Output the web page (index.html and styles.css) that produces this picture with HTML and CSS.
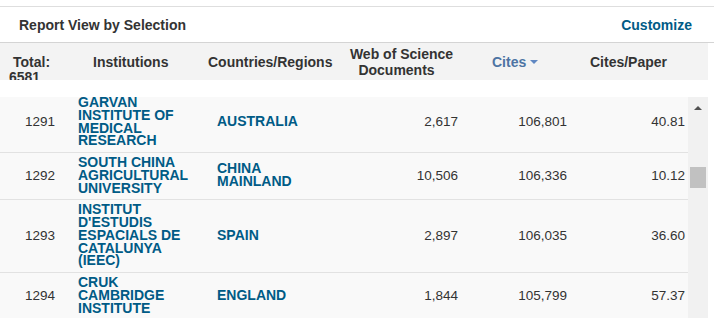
FILE: index.html
```html
<!DOCTYPE html>
<html>
<head>
<meta charset="utf-8">
<link rel="stylesheet" href="styles.css">
</head>
<body>
<div class="panel">
  <div class="titlebar">
    <span class="title">Report View by Selection</span>
    <a class="customize">Customize</a>
  </div>
  <div class="thead">
    <div class="th th-total"><span class="total-label">Total:</span><span class="total-num">6581</span></div>
    <div class="th th-inst">Institutions</div>
    <div class="th th-country">Countries/Regions</div>
    <div class="th th-docs"><span class="l1">Web of Science</span><span class="l2">Documents</span></div>
    <div class="th th-cites">Cites<span class="caret"></span></div>
    <div class="th th-cpp">Cites/Paper</div>
    <div class="th th-gap"></div>
  </div>
  <div class="tbody">
    <div class="rows">
      <div class="rows-inner">
        <div class="row">
          <div class="td rank">1291</div>
          <div class="td inst">GARVAN INSTITUTE OF MEDICAL RESEARCH</div>
          <div class="td country">AUSTRALIA</div>
          <div class="td num docs">2,617</div>
          <div class="td num cites">106,801</div>
          <div class="td num cpp">40.81</div>
        </div>
        <div class="row">
          <div class="td rank">1292</div>
          <div class="td inst">SOUTH CHINA AGRICULTURAL UNIVERSITY</div>
          <div class="td country">CHINA MAINLAND</div>
          <div class="td num docs">10,506</div>
          <div class="td num cites">106,336</div>
          <div class="td num cpp">10.12</div>
        </div>
        <div class="row">
          <div class="td rank">1293</div>
          <div class="td inst">INSTITUT D'ESTUDIS ESPACIALS DE CATALUNYA (IEEC)</div>
          <div class="td country">SPAIN</div>
          <div class="td num docs">2,897</div>
          <div class="td num cites">106,035</div>
          <div class="td num cpp">36.60</div>
        </div>
        <div class="row">
          <div class="td rank">1294</div>
          <div class="td inst">CRUK CAMBRIDGE INSTITUTE</div>
          <div class="td country">ENGLAND</div>
          <div class="td num docs">1,844</div>
          <div class="td num cites">105,799</div>
          <div class="td num cpp">57.37</div>
        </div>
      </div>
    </div>
    <div class="scrollbar">
      <div class="sb-arrow"></div>
      <div class="sb-thumb"></div>
    </div>
  </div>
</div>
</body>
</html>
```

FILE: styles.css
```css
html, body {
  margin: 0;
  padding: 0;
  background: #ffffff;
}

body {
  font-family: "Liberation Sans", Arial, sans-serif;
  color: #333333;
  width: 714px;
  height: 318px;
  overflow: hidden;
}

.panel {
  padding-top: 6px;
}

.titlebar {
  display: flex;
  align-items: center;
  justify-content: space-between;
  height: 35px;
  padding: 0 22px 0 19px;
  border-top: 1px solid #dedede;
  border-bottom: 1px solid #d4d4d4;
}

.title {
  font-size: 14px;
  font-weight: bold;
  color: #333333;
}

.customize {
  font-size: 14px;
  font-weight: bold;
  color: #005b86;
  text-decoration: none;
}

.thead {
  display: grid;
  grid-template-columns: 70px 135px 140px 118px 109px 116px 20px;
  width: 708px;
  height: 37px;
  background: #f3f3f3;
  font-size: 14px;
  font-weight: bold;
  line-height: 16px;
  color: #333333;
}

.th {
  align-self: center;
}

.th-total {
  align-self: stretch;
  overflow: hidden;
  display: flex;
  flex-direction: column;
  padding: 12px 0 0 9px;
  line-height: 15px;
}

.total-label {
  padding-left: 4px;
}

.th-inst {
  padding-left: 23px;
}

.th-country {
  padding-left: 3px;
}

.th-docs {
  display: flex;
  flex-direction: column;
  align-items: center;
  padding-right: 5px;
}

.th-docs .l2 {
  padding-right: 10px;
}

.th-cites {
  padding-left: 29px;
  color: #4d74a3;
}

.caret {
  display: inline-block;
  vertical-align: middle;
  margin-left: 4px;
  margin-top: -2px;
  border-left: 4px solid transparent;
  border-right: 4px solid transparent;
  border-top: 4px solid #5f87c2;
}

.th-cpp {
  padding-left: 18px;
}

.tbody {
  display: flex;
  width: 708px;
  height: 221px;
  margin-top: 17px;
}

.rows {
  flex: 1;
  overflow: hidden;
  background: #f9f9f9;
}

.rows-inner {
  margin-top: -4px;
}

.row {
  display: grid;
  grid-template-columns: 70px 135px 140px 118px 109px 116px;
  align-items: center;
  border-bottom: 1px solid #e2e2e2;
}

.td {
  padding: 3px 0 5px 0;
}

.rank {
  text-align: right;
  padding-right: 15px;
  font-size: 13.5px;
  color: #333333;
}

.inst {
  padding-left: 8px;
  padding-right: 9px;
  font-size: 14px;
  font-weight: bold;
  line-height: 12.75px;
  color: #005b86;
}

.country {
  padding-left: 12px;
  padding-right: 30px;
  font-size: 14px;
  font-weight: bold;
  line-height: 12.75px;
  color: #005b86;
}

.num {
  text-align: right;
  font-size: 13.5px;
  color: #333333;
}

.docs {
  padding-right: 5px;
}

.cites {
  padding-right: 5px;
}

.cpp {
  padding-right: 3px;
}

.scrollbar {
  width: 20px;
  background: #f1f1f1;
  display: flex;
  flex-direction: column;
  align-items: center;
}

.sb-arrow {
  margin-top: 9px;
  width: 0;
  height: 0;
  border-left: 4px solid transparent;
  border-right: 4px solid transparent;
  border-bottom: 4px solid #505050;
}

.sb-thumb {
  margin-top: 57px;
  width: 16px;
  height: 21px;
  background: #c1c1c1;
}
```
